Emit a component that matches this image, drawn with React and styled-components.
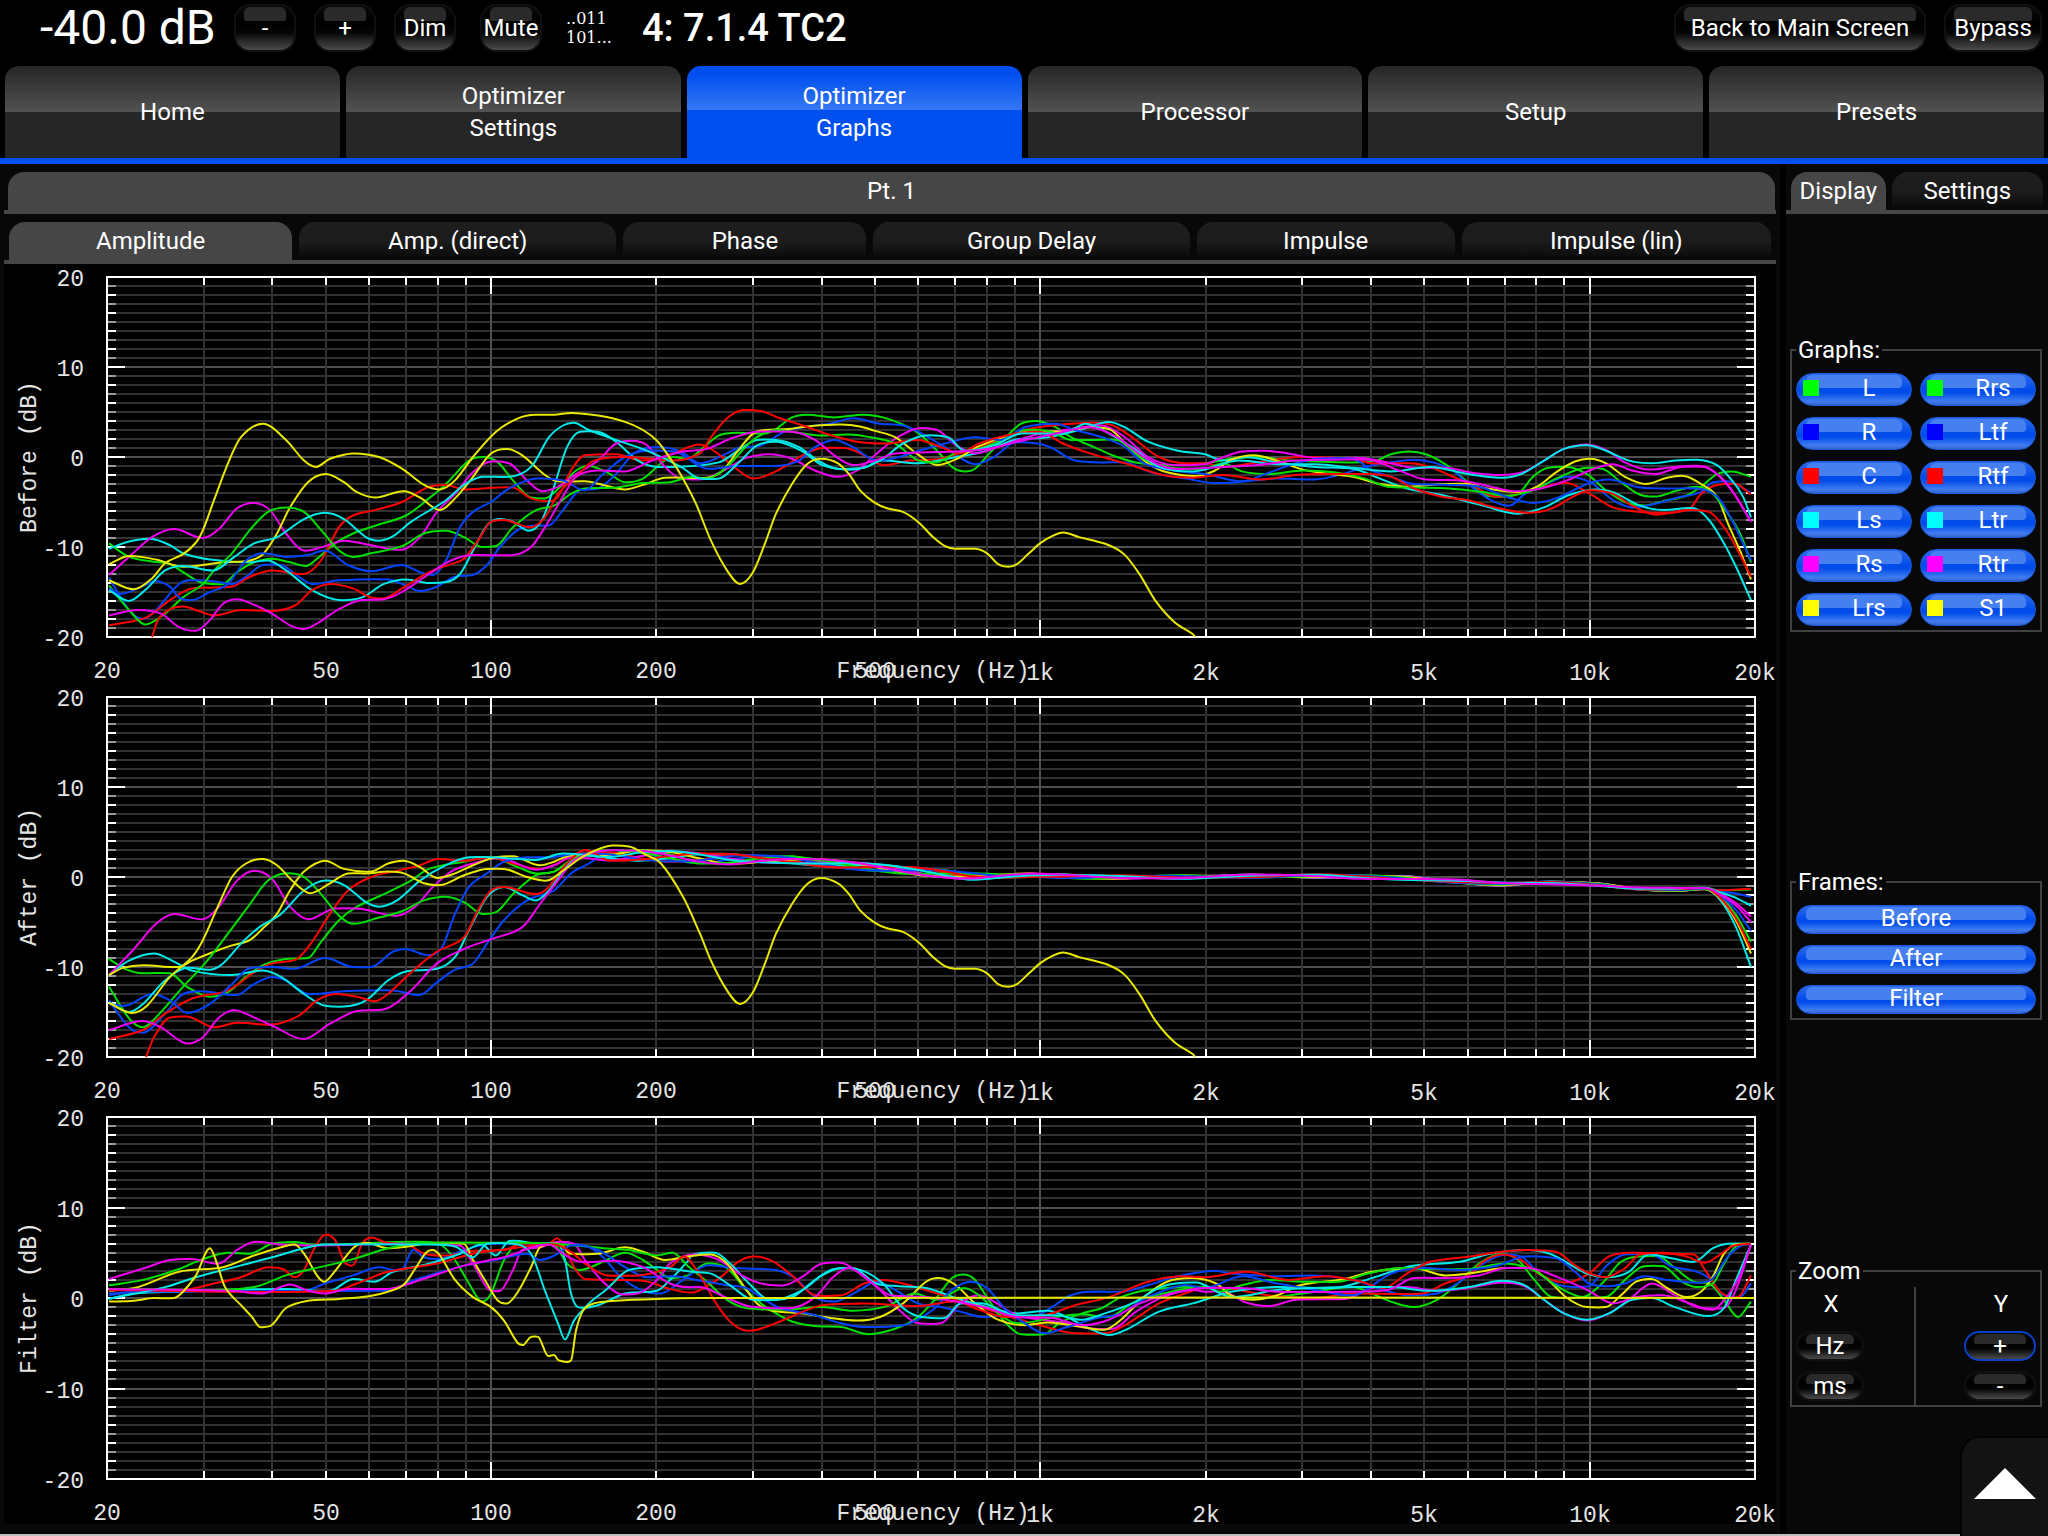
import React, { useState } from "react";
import styled, { createGlobalStyle } from "styled-components";

const GlobalStyle = createGlobalStyle`
  * { box-sizing: border-box; }
  body {
    margin: 0;
    background: #000;
    color: #fff;
    font-family: Roboto, "Liberation Sans", sans-serif;
    font-size: 24px;
    line-height: 32px;
  }
  button { font: inherit; color: inherit; cursor: pointer; }
`;

/* ---------- channel data: "x,dB" pairs, x along the log frequency axis ---------- */

const BEFORE = {
  L: "109,-9.6 129,-11.1 152,-11.6 170,-11.9 183,-12.8 203,-14 223,-14.1 237,-12.8 254,-11.7 272,-11.3 290,-11.7 306,-12.1 317,-11.3 335,-9.6 353,-8.5 379,-7.5 406,-6.5 429,-4.6 446,-3 469,-.4 484,0 498,-.6 513,-2.6 531,-4.5 545,-4.6 563,-3 576,-1.5 589,-1 607,-1.7 625,-2.8 643,-2.4 661,-.7 673,0 688,-.2 704,1.1 719,2.4 738,2.7 765,2.6 776,3.1 792,4.4 807,4.7 834,4.4 864,4.7 883,4.4 903,3.6 919,2.6 937,.7 952,-1.1 964,-1.6 975,-1.3 991,.6 1006,2.2 1021,3.7 1037,4 1056,3.3 1071,2.2 1094,1.1 1117,0 1140,-.7 1174,-.9 1205,-.7 1231,-.2 1257,0 1292,-.4 1353,-.6 1376,-.4 1391,.3 1409,.6 1426,.3 1445,-.8 1468,-2.8 1487,-4.3 1502,-4.4 1518,-4.1 1533,-2.2 1548,-1.2 1567,-1.1 1587,-1.9 1606,-3.7 1625,-5 1644,-5.4 1663,-4.9 1686,-4.3 1701,-3.3 1717,-1.9 1732,-1.6 1751,-2.2",
  R: "109,-13.4 129,-17 143,-18 156,-17 179,-14.1 192,-13.7 214,-13.8 232,-14.1 246,-13.3 263,-12 281,-12 295,-13 312,-14.1 339,-13.7 388,-13.6 402,-14.1 420,-14.9 437,-14.4 455,-13.3 473,-13.1 487,-12 500,-10 518,-8.1 536,-7.6 549,-7.6 563,-5.9 580,-3.7 598,-3.5 616,-1.9 634,.4 656,1.1 681,.6 700,-.7 727,.4 738,1 761,1.3 784,2.8 803,3.3 830,3.7 853,4.3 880,3.7 903,3.5 922,2.6 945,1.1 975,-.8 994,0 1015,1.6 1037,1.5 1052,1 1075,-.4 1102,-.6 1125,-.6 1151,-1.7 1186,-2.4 1216,-2.9 1238,-2.8 1277,-2.4 1315,-2.5 1342,-1.9 1365,-1.1 1391,-.6 1414,-.3 1433,-.6 1453,-1.5 1468,-3 1491,-4.8 1510,-5.4 1525,-4.1 1544,-3.1 1567,-2.2 1590,-2.8 1613,-4.8 1632,-5.6 1655,-5.2 1678,-4.5 1701,-3.9 1713,-2.8 1728,-2.7 1751,-4",
  C: "109,-18.7 125,-18.4 147,-17.8 170,-15.9 192,-14.6 232,-14.4 250,-13.3 272,-12.6 304,-13 321,-11.5 339,-7.8 353,-6.5 375,-5.9 402,-5 429,-3.3 446,-3.1 464,-3.6 513,-3.4 531,-4.6 549,-4.9 558,-4.4 571,-1.5 585,.2 616,.3 643,-.4 673,.4 700,1.4 715,.6 734,-1.1 753,-2.4 776,-1.6 803,.2 822,1 845,1 864,.2 883,-.9 910,-.4 941,-.2 964,.6 994,1.7 1025,3 1052,3.5 1094,3.8 1113,3.5 1132,2.2 1159,0 1186,-.7 1205,-.7 1223,-1.1 1257,-.6 1300,0 1353,-.2 1372,-.7 1410,-.7 1430,-1.1 1449,-2 1472,-3.1 1495,-4.4 1518,-4.1 1544,-3.3 1567,-2.9 1590,-4.1 1613,-5.6 1640,-6.1 1667,-6.2 1690,-5.7 1701,-4.1 1717,-3.1 1736,-3 1751,-4.2",
  Ls: "109,-10.2 129,-9.4 152,-9.1 170,-9.8 183,-10.7 210,-11.4 250,-11.7 268,-11.5 286,-12.6 312,-14.8 339,-15.9 362,-15.6 384,-14.1 406,-13.6 429,-14 446,-13.9 460,-13 473,-10.4 487,-7.6 500,-6.9 513,-7.2 529,-8.2 542,-7 554,-3.3 567,1.1 580,2.8 598,2.8 616,1.7 638,-.4 657,-1.1 673,-1.1 719,-.6 738,.7 757,1.9 776,1.9 799,1.1 818,-.4 838,-1.3 864,-1.2 880,-.4 918,-.7 956,0 987,.7 1014,1.9 1048,2.2 1079,3 1109,3.9 1125,3.3 1148,1.7 1178,.7 1205,.3 1223,-.4 1246,0 1277,-.6 1315,-1.1 1353,-1.3 1380,-2.4 1407,-3.5 1445,-4.3 1483,-5.4 1518,-6.3 1544,-5.6 1567,-4.3 1594,-3.6 1613,-3.9 1640,-5.4 1663,-5.9 1694,-5.7 1709,-7 1724,-9.6 1736,-12.2 1751,-15.9",
  Rs: "109,-13.1 129,-11.1 152,-8.9 174,-8 203,-9 219,-8 237,-5.7 254,-5.1 270,-5.9 286,-8.5 304,-10.4 325,-9.9 344,-9.3 371,-9.8 402,-10.3 420,-8.9 437,-6.1 455,-4.1 473,-1.7 491,-.5 509,-.7 527,-2.6 542,-3.8 558,-3.3 576,-1.9 598,-.4 616,1.5 632,1.8 647,1.3 665,-1.1 681,-2.4 700,-2.5 727,-1.3 746,-.1 769,.3 792,-.2 815,-1.5 838,-2.2 857,-1.5 875,.2 895,2 919,3.2 937,3 956,1.3 975,.4 998,1.1 1033,2.4 1071,3.1 1102,3.5 1125,2.2 1148,0 1174,-.9 1205,-.8 1219,-.2 1242,.6 1265,.7 1288,.4 1315,-.1 1361,-.1 1391,-.7 1414,-1.2 1445,-1.2 1475,-1.8 1502,-2 1525,-1.6 1544,-.4 1564,.9 1587,1.4 1606,.8 1625,-.6 1648,-1.4 1675,-1.1 1701,-1 1717,-1.9 1732,-3.7 1751,-7.2",
  Lrs: "109,-11.9 129,-11 156,-11.4 183,-12.2 223,-11.7 250,-11.5 263,-10.8 277,-8.5 290,-5.6 308,-2.8 326,-1.9 344,-2.8 357,-3.9 375,-4.5 404,-3.8 420,-4.5 440,-5.9 455,-4.6 473,-2.2 491,.4 507,.9 522,.2 545,-2 558,-2.7 585,-2.7 603,-3.1 625,-3.6 643,-3.1 665,-2.3 707,-2.3 723,-1.5 738,.7 753,2.6 765,3 788,3.1 807,3.4 841,3.6 860,3.4 875,2.9 895,2.2 919,.2 937,-.9 955,-.3 979,1.2 1015,2.6 1040,2.9 1063,2.8 1090,3.3 1109,3.1 1129,1.1 1148,-.7 1167,-1.7 1197,-2.1 1215,-1.5 1231,-.3 1254,.2 1277,-.4 1303,-1.4 1330,-1.9 1353,-2.2 1380,-3 1407,-3.3 1445,-3 1468,-3 1487,-3.5 1518,-3.9 1537,-3.3 1556,-1.7 1575,-.5 1590,-.2 1606,-.7 1625,-2.2 1646,-3 1667,-2.3 1684,-2.1 1701,-3 1717,-4.4 1728,-7.4 1740,-10.4 1751,-13.6",
  Rrs: "109,-14.3 129,-17 145,-18.6 165,-17.4 183,-15.6 203,-14.1 214,-12.6 232,-10.7 250,-8.1 268,-6.1 286,-5.6 304,-6.1 321,-8.1 339,-10.4 353,-11.1 371,-10.7 402,-9.9 424,-8.5 446,-8.2 464,-8.9 482,-10 496,-9.9 513,-7.8 536,-5.9 554,-5.4 571,-4.1 585,-3.5 616,-3.4 643,-2.9 670,-2.8 692,-2.2 707,-2.4 727,-1.1 742,.7 757,2.2 776,3 803,2.6 822,2.4 849,2.5 875,2.1 895,1.5 919,-.4 937,-.6 955,.4 979,.9 1002,1.9 1025,3 1048,2.9 1071,1.9 1094,1.9 1117,1.9 1140,0 1163,-1.1 1205,-1.3 1223,-.7 1242,-1.6 1269,-1.9 1303,-1.5 1334,-1.7 1365,-2.4 1388,-3.3 1414,-3.4 1449,-3.5 1483,-3.9 1506,-4.3 1533,-3.7 1556,-2.4 1587,-1.2 1602,-1.3 1621,-2.8 1640,-4.2 1655,-4.4 1678,-3.7 1697,-3.3 1713,-4.1 1728,-6.3 1740,-8.5 1751,-11.7",
  Ltf: "109,-14.6 121,-15.2 138,-14.6 156,-13.8 170,-14.4 179,-15.6 192,-15.9 210,-15 228,-14.1 246,-11.5 263,-10.7 286,-11.1 308,-10.9 325,-10.4 348,-12 371,-12.7 402,-12 420,-12.8 433,-13.1 446,-11.5 460,-7.8 473,-6.1 491,-5 509,-3.5 536,-2.4 563,-2.6 585,-3.7 603,-1.9 625,0 647,.7 674,.6 707,-1.3 738,-1 776,-1 799,-.4 815,1.1 834,1.9 853,1.1 876,-.4 899,0 919,.7 945,1.5 975,2.2 1002,1.9 1025,3.3 1056,3.7 1075,3 1102,2.2 1125,1.1 1144,-.7 1174,-1.5 1205,-1.9 1242,-2.7 1265,-1.9 1296,-.7 1322,-.2 1353,-.2 1372,-1.5 1391,-2.2 1414,-3 1449,-3.1 1479,-3.3 1506,-4.4 1533,-5.1 1556,-4.6 1587,-3 1609,-2.5 1640,-3.4 1667,-3.5 1697,-3.5 1717,-4.4 1732,-7 1743,-9.6 1751,-11.5",
  Rtf: "152,-20 158,-18.1 170,-16.9 183,-16.6 201,-17.2 214,-17.6 241,-17 272,-17.1 295,-16.5 312,-14.8 330,-14.1 353,-14.6 371,-15.6 384,-15.7 402,-14.6 429,-12.8 451,-11.9 464,-11.3 478,-9.3 491,-7.2 504,-7 531,-7.8 545,-6.7 558,-4.1 576,-2.2 594,-.4 625,0 652,-.2 673,-.4 700,.4 711,2.2 727,4.3 742,5.2 761,5.1 780,4.3 803,3.5 826,2.6 857,1.7 887,1.5 918,1.9 941,1.1 960,.4 979,1.5 1015,2.6 1040,2.8 1063,1.5 1090,.4 1125,-.7 1163,-2 1193,-2.3 1223,-2 1261,-2.5 1296,-2 1334,-1.9 1365,-1.9 1391,-2.2 1414,-3.5 1441,-4.4 1468,-4.8 1495,-5.6 1529,-6.2 1552,-5.7 1575,-4.3 1590,-3.7 1613,-4.1 1632,-5.4 1655,-6.4 1690,-5.9 1709,-6.1 1724,-7.8 1736,-10 1751,-13.3",
  Ltr: "109,-14.8 129,-16 147,-14.6 165,-12.6 183,-12.1 214,-12.6 232,-11.3 254,-9.6 277,-8.9 304,-6.9 325,-6.2 344,-6.9 366,-8.9 379,-9.3 393,-8.8 411,-7.2 446,-4.8 464,-3.1 482,-2.2 509,-2.2 531,-1.1 549,2.2 563,3.5 574,3.8 589,3 616,1.9 647,.7 681,-1.1 700,-2.4 719,-2.4 738,-.7 757,1.3 776,1.7 803,.6 822,-.9 853,-1.4 880,-.4 903,1.5 926,2.4 948,2.2 964,.7 994,1.3 1021,2.6 1063,2.6 1086,3.7 1109,2.6 1132,1.1 1159,-1.1 1193,-1.6 1205,-1.4 1238,-.4 1277,-.8 1315,-.8 1353,-1.2 1391,-1.6 1430,-1.1 1468,-1.9 1502,-2.3 1521,-1.9 1544,-.4 1564,.9 1587,1.3 1606,.7 1629,-.4 1652,-.7 1675,-.4 1697,-.3 1717,-.9 1732,-2.6 1743,-4.4 1751,-6.7",
  Rtr: "109,-17.6 138,-17 161,-17.4 179,-18.9 196,-19.3 210,-18.1 223,-16.3 237,-15.8 254,-16.4 272,-17.4 290,-18.7 304,-19.1 317,-18.5 339,-16.9 362,-15.9 384,-15.8 402,-15 429,-13 451,-11.5 473,-10.9 513,-10.9 531,-10 545,-7.8 563,-4.4 576,-2.2 598,-1.5 625,-1.6 652,-.4 683,.6 707,.9 730,2 757,2.8 792,2.8 815,1.9 834,.2 853,-.9 875,-.4 895,.4 956,.6 987,.9 1025,1.9 1056,2.6 1090,3.3 1117,2.2 1144,0 1174,-1.3 1224,-1.1 1257,-.9 1296,-.4 1334,-.3 1368,-.3 1399,-1.5 1426,-2.5 1460,-2.6 1491,-3.3 1514,-3.8 1541,-3.5 1567,-2.6 1594,-1.3 1613,-.8 1632,-1.5 1655,-1.9 1682,-1.1 1705,-1.1 1720,-2.2 1736,-4.4 1751,-7.2",
  S1: "109,-13.7 134,-14.7 152,-13.5 165,-11.8 183,-10.8 196,-9.5 203,-8.1 214,-4.8 228,-.7 241,2.2 263,3.7 286,1.9 304,-.4 316,-1.1 330,-.2 353,.4 379,0 402,-1.3 424,-3.1 440,-3.6 455,-2.6 473,0 496,2.8 518,4.3 536,4.7 554,4.7 571,4.9 598,4.6 625,3.9 643,3 657,1.8 673,-.6 684,-2.6 696,-5.2 711,-9.3 727,-12.6 740,-14.1 753,-12.8 765,-9.6 776,-6.3 792,-3 807,-.8 821,-.2 838,-.7 849,-1.9 860,-3.7 875,-5.1 887,-5.7 903,-6.1 919,-7.3 933,-8.9 945,-9.9 955,-10.2 975,-10.2 987,-10.7 998,-11.9 1008,-12.2 1017,-11.9 1029,-10.7 1040,-9.6 1052,-8.8 1063,-8.4 1079,-8.9 1109,-9.8 1125,-10.9 1140,-13.1 1155,-15.9 1174,-18.3 1193,-19.7 1195,-20",
};

const AFTER_LOW = {
  L: "109,-9.1 125,-10.2 143,-10.7 170,-10.7 187,-12.2 210,-13.3 228,-12.8 246,-11.1 263,-9.8 286,-9.1 308,-9 321,-7.2 339,-4.8 357,-3.3 384,-1.9 411,-.4 429,.9 464,1.7 491,2.2 518,1.1 536,.4 554,.6 576,2.2",
  R: "109,-13.7 129,-16.7 143,-17.3 165,-15.2 183,-13 201,-12.7 237,-13.1 254,-11.9 272,-11.1 286,-11.5 308,-13 344,-12.7 393,-12.6 420,-13.1 437,-11.7 455,-10.3 473,-9.6 487,-7.4 504,-4.8 527,-2.6 554,-1.5 571,.4 589,1.5",
  C: "109,-18 143,-17 165,-15.2 192,-13.5 228,-12.6 254,-10.6 272,-9.6 297,-9.1 312,-7.2 330,-4.1 348,-1.5 371,0 393,.6 420,1.3 437,2 464,1.8 491,2.2 513,1.5 540,.9 558,1.5 576,2.6",
  Ls: "109,-10.9 129,-9.3 154,-8.5 174,-9.4 192,-10.4 232,-10.9 263,-10.4 281,-11.1 304,-13 325,-14.3 344,-14.4 366,-13.7 388,-11.5 406,-10.5 437,-10.2 455,-8.9 469,-5.9 487,-2.2 504,-1.1 522,-2 536,-2.6 549,-1.5 563,.7 580,2.4",
  Rs: "109,-10.9 134,-8 156,-5.2 174,-4.1 203,-4.7 219,-3.3 237,-.4 254,.7 272,-.2 290,-3.3 308,-4.7 335,-3.5 357,-3.5 397,-4.3 415,-3.3 433,-1.1 451,.6 473,1.5 500,2.1 536,.8 554,1.3 571,2.2",
  Lrs: "109,-10.9 123,-10.1 143,-9.8 179,-10 192,-9.3 214,-8.3 232,-7.6 250,-7 263,-5.7 277,-4.1 290,-1.5 304,.6 325,1.8 344,.9 371,.6 388,1.5 404,1.8 420,1.1 437,-.1 455,.4 473,1.3 496,2.2 513,2.3 540,1.3 554,1.7 571,2.4",
  Rrs: "109,-12.2 129,-15.7 143,-16.7 156,-15.6 183,-12.2 205,-9.6 228,-6.3 250,-3 268,-.4 286,.4 304,0 321,-1.9 339,-4.3 353,-5.2 379,-4.5 402,-3.8 424,-2.6 446,-2.2 464,-2.8 482,-4.1 496,-3.9 513,-1.9 536,.2 554,.6 576,2.2",
  Ltf: "109,-14.1 125,-14.3 152,-13 170,-13.7 187,-15.1 210,-14.1 232,-11.9 250,-10.1 272,-10 295,-10.2 325,-9 353,-10 371,-10 393,-8.3 405,-8 429,-8.7 442,-7.8 455,-4.1 469,-1.1 487,.4 504,1.7 527,2.2 549,2.2 580,2.6",
  Rtf: "146,-20 154,-17.8 170,-15.6 187,-15.5 214,-16.7 237,-16.2 272,-16.4 299,-15.4 317,-13.7 335,-13 357,-13.3 375,-13.8 388,-13 411,-10.6 437,-8.3 464,-6.7 478,-3.7 491,-1.5 504,-1.1 536,-1.9 547,-1.3 567,1.5 585,3",
  Ltr: "109,-13.9 129,-15 143,-14.1 165,-11.5 187,-10.1 210,-10.3 223,-9.6 241,-7.4 259,-5.6 281,-4.1 304,-1.5 325,-.4 344,-.9 366,-2.8 379,-3.3 397,-2.6 420,-.4 442,1.1 469,2.2 491,2.2 536,1.9 563,2.6",
  Rtr: "109,-17 143,-16 161,-16.7 187,-18.5 203,-17.8 219,-15.6 234,-14.8 254,-15.6 272,-16.5 304,-18 330,-16.3 357,-14.9 384,-14.7 411,-12.6 437,-9.6 464,-8 491,-6.9 522,-5.6 540,-3 558,-.4 576,2",
  S1: "109,-14 132,-15.1 147,-14.3 170,-11.1 192,-8.9 203,-7 219,-3 232,0 246,1.5 263,2 277,1.3 295,-.7 310,-1.8 330,-.7 348,.4 366,.4 388,.6 404,.4 424,-.7 440,-.9 464,.2 487,.9 504,.9 527,0 547,-.4 563,.7 585,2.4 612,3.5 629,3.4 647,2.4 661,1.5 683,-2.2 700,-6.3 711,-9.3 727,-12.6 740,-14.1 753,-12.8 765,-9.6 776,-6.3 792,-3 807,-.8 821,-.1 838,-.7 849,-1.9 860,-3.7 875,-5.1 887,-5.7 903,-6.1 919,-7.3 933,-8.9 945,-9.9 955,-10.2 975,-10.2 987,-10.7 998,-11.9 1008,-12.2 1017,-11.9 1029,-10.7 1040,-9.6 1052,-8.8 1063,-8.4 1079,-8.9 1109,-9.8 1125,-10.9 1140,-13.1 1155,-15.9 1174,-18.3 1193,-19.7 1195,-20",
};

const FILTER = {
  L: "109,1.4 143,2 179,3.2 203,4.3 228,5 250,4.9 272,6 295,6.2 312,5.9 429,6.2 442,5.8 455,4.2 469,1.6 482,-.4 491,.5 504,4.2 518,6 554,5.9 567,3.8 580,3.1 603,4 625,5 643,4.2 657,3.1 670,2.2 688,2.5 707,3.8 727,3.3 746,.9 761,-.6 776,-1.7 792,-2.6 815,-3.1 841,-3.2 868,-4 895,-3.4 918,-2.1 937,.1 952,2.2 964,2.6 975,2 991,-.6 1006,-2.8 1021,-4 1044,-4 1059,-2.8 1082,-1.7 1102,-1.1 1121,.1 1148,.9 1205,1.2 1223,.5 1246,-.1 1277,.1 1315,.7 1353,1.2 1372,.5 1391,-.4 1414,-1 1437,-.2 1456,1.4 1479,3.8 1502,4.9 1518,4.2 1533,2.2 1552,.1 1583,.1 1602,1.6 1621,4 1640,4.6 1659,4.6 1675,3.3 1694,1.8 1709,1.6 1724,-.2 1738,-2.1 1751,-.4",
  R: "109,.5 156,.8 304,.8 325,1.6 353,2.5 379,3.4 393,3.1 402,3.2 413,5.3 424,4.5 437,4.3 464,5.3 491,6 549,6 585,5.8 603,4.5 621,2.3 643,.8 661,.5 683,2 707,3.6 734,3.3 776,3.1 795,2.2 815,.1 834,-.4 857,.7 876,1.8 895,.9 918,-.6 941,-1 960,-1.5 983,-2.1 1010,-1.9 1033,-2.1 1052,-1 1071,.3 1090,.7 1121,.7 1148,1.4 1178,2.4 1216,3 1231,2.7 1277,2.4 1315,2.5 1353,2 1383,.9 1407,.3 1437,.5 1460,1.8 1483,3.8 1506,4.8 1521,4.6 1541,2.5 1564,1.3 1589,1.3 1606,3.5 1625,4.8 1652,4.8 1671,3.5 1694,3 1709,2.2 1724,.3 1740,.1 1751,1.6",
  C: "109,1 183,.9 214,1.6 241,2.3 268,3.4 283,3.2 295,2.3 304,3.1 315,5.6 325,7 335,6.4 346,3.8 353,3.6 362,6 371,6.7 384,6.2 411,5.7 424,4.9 446,4.7 473,5.2 504,5.3 522,6 549,6 557,6.6 565,5.6 574,3.4 585,2.1 616,2 643,1.9 670,1 692,.6 707,1.3 723,2.5 738,4 753,4.6 772,4.1 792,2.5 815,.3 841,.3 864,1.6 883,2 903,1.6 937,.5 968,-.6 1006,-1.9 1040,-3 1075,-3.9 1105,-3.9 1128,-2.8 1159,-.6 1190,.7 1205,1.2 1238,.9 1269,.3 1315,0 1353,.5 1422,.5 1445,1.6 1468,2.5 1483,4 1502,4.8 1521,4.2 1541,2.5 1567,1.7 1589,2.7 1609,4.6 1632,5 1667,4.9 1694,4.8 1705,3.1 1720,.7 1738,.1 1751,2.5",
  Ls: "109,-.1 134,.5 179,.7 286,1 330,.8 353,2.1 375,1.8 393,2.9 429,3.8 460,4.9 482,5.9 496,4.7 509,6.3 540,6 558,6 565,4.2 571,.5 578,-1 598,-.8 625,.5 657,.8 670,2 688,4.1 692,4.8 715,5 730,3.8 749,1.6 769,-.2 792,.1 815,2 834,3.2 853,3.3 876,1.6 899,1.3 926,1.1 956,0 987,-1 1017,-1.7 1048,-1.4 1067,-2.1 1090,-3.4 1109,-4.1 1128,-3.4 1159,-1.5 1193,-.6 1205,-.2 1231,.7 1277,1.2 1334,1.1 1372,2.2 1410,3.5 1460,4 1495,5 1529,5.3 1552,4.8 1587,2.7 1609,2.3 1629,2.9 1648,4.8 1671,4.4 1694,4 1713,5.5 1728,6 1751,6",
  Rs: "109,2.1 147,3.4 170,4.2 192,4.3 219,3.8 237,5.3 254,6.2 281,5.9 312,5.8 402,6 460,5.8 473,3.8 491,.8 500,.8 513,3.1 522,5.3 540,5.6 558,6.2 574,6 585,4.2 603,1.8 621,.4 638,.5 657,2 670,3.8 683,4.6 696,4.8 719,4.2 742,2.5 761,1.6 784,1.4 803,2.4 822,3.8 841,3.9 860,2.7 880,.9 899,-1.3 918,-2.8 941,-2.8 960,-.6 979,.3 994,-.4 1017,-1.9 1056,-2.6 1094,-3.4 1113,-3.4 1136,-1.5 1163,.1 1193,.9 1205,.7 1223,.7 1246,-.5 1269,-.9 1296,-.2 1345,-.1 1376,1.2 1407,1.2 1437,.8 1468,1.1 1502,1.7 1525,1.3 1544,-.2 1564,-1.7 1587,-2.5 1609,-1.7 1629,-.2 1652,1.6 1675,.3 1701,-1.1 1724,-1.1 1736,.9 1751,5.9",
  Lrs: "109,.8 138,1.2 179,2.9 223,3.4 254,4.7 281,5.6 295,5.9 304,4.9 324,1.8 333,2.7 353,5.5 366,6.1 388,5.5 437,6.1 464,6 473,4.2 487,1.6 498,-.3 507,-.6 518,.7 531,3.4 540,5.6 558,6 571,4.9 598,4.9 625,5.6 643,5.1 665,4.2 688,4.6 711,4.8 727,3.8 742,1.6 757,-.6 772,-1.4 803,-1.7 830,-2.2 857,-2.5 880,-2.1 903,-.6 926,1.8 939,2.2 956,1.4 975,-.6 998,-2.4 1025,-3 1048,-2.7 1082,-3.2 1105,-3.5 1121,-2.4 1144,.1 1167,1.8 1193,2.2 1216,1.6 1231,.3 1254,-.2 1277,.3 1300,1.4 1345,2.1 1372,2.9 1414,3.3 1445,2.5 1468,2.7 1506,3.3 1529,3.3 1548,2 1567,0 1587,-1 1606,-1 1621,.3 1636,1.8 1652,2.1 1667,1.1 1686,.1 1701,.7 1713,2.4 1724,4.9 1736,5.9 1751,6",
  Rrs: "109,1 214,.9 254,1.2 286,2.5 312,3.2 353,4.3 388,5.5 424,6.1 513,6.1 554,6 603,5.5 629,5.3 657,4.7 673,5 688,3.5 707,1.8 727,-.2 746,-1.1 784,-1.3 822,-1 853,-1.4 887,-.9 914,.5 937,-.2 964,1.1 979,.3 998,-1.7 1017,-2.8 1056,-2.1 1082,-1.8 1109,-2.1 1132,-.6 1163,.5 1205,1.2 1219,.7 1242,1.4 1269,2 1303,1.8 1338,1.8 1368,2.7 1399,3.3 1430,3.2 1468,3.2 1506,3.8 1533,3.1 1560,1.1 1583,.1 1606,.1 1625,2 1644,3.5 1663,3.5 1682,1.8 1697,1.2 1713,1.6 1724,3.8 1736,5.7 1751,6",
  Ltf: "109,.3 134,.7 384,.8 415,2 465,3.6 500,4.3 527,4.9 540,4.2 558,4.9 571,5.8 598,5.3 625,3.4 647,2.3 673,2.4 696,2 727,1.4 746,1.1 765,-.2 780,-1.1 815,-1.9 841,-2.8 864,-3.2 903,-3 933,-1.3 952,.9 971,1.8 987,1.1 1006,-1.3 1025,-2.8 1044,-3.9 1067,-3.2 1098,-2.2 1121,-1.7 1148,.1 1186,1.4 1205,1.1 1242,2.4 1277,1.6 1315,.9 1353,.3 1391,2.7 1422,3.3 1460,3.1 1498,3.6 1525,4.6 1556,4.4 1575,2.9 1589,1.6 1606,1.3 1625,1.6 1644,2.4 1667,2 1701,1.7 1713,2.2 1728,4.6 1740,5.7 1751,6",
  Rtf: "109,.9 335,.8 357,1.6 388,2.9 437,3.8 473,4.9 500,5.3 554,5.9 571,5.1 585,3.8 607,2.5 638,2.5 670,3.4 684,4.6 700,2.5 715,-.4 730,-2.6 746,-3.6 757,-3.5 780,-2.6 803,-1.5 822,-.8 864,-.6 918,-.9 956,-.4 979,-1.3 1006,-2.1 1044,-1.9 1075,-.8 1109,.1 1148,1.8 1182,2.4 1205,2.3 1246,2.9 1288,2 1326,2.4 1361,1.8 1384,1.1 1407,2.7 1430,4 1464,4.5 1502,5.1 1529,5.3 1556,5.1 1575,3.6 1590,2.7 1606,2.3 1625,3.3 1640,4.8 1663,5 1686,4.6 1705,3.9 1720,4.8 1732,5.7 1751,6",
  Ltr: "109,-.1 165,1.2 196,2.3 241,3.6 272,4.5 304,5.5 325,5.9 429,5.9 455,5.7 473,4.5 487,6 513,6 531,4.9 545,.8 558,-2.8 565,-4.6 574,-2.5 589,-.6 607,1 629,3.1 657,3.4 692,2.9 711,2.7 730,1.4 753,-.2 776,-.2 803,.9 822,2.5 841,3.3 860,3.1 883,1.6 903,-1.1 922,-2.1 945,-2.2 960,-.6 983,-.6 1014,-1.9 1056,-1.9 1082,-2.4 1105,-1.7 1132,-.6 1163,1.3 1197,1.7 1205,1.4 1231,.1 1277,.9 1315,1.1 1353,1.2 1391,1.2 1430,.8 1468,1.2 1502,1.9 1525,1.4 1544,-.2 1564,-1.7 1587,-2.4 1609,-1.7 1632,-.2 1652,0 1675,-1 1709,-2 1724,-1.1 1736,2 1751,5.9",
  Rtr: "109,1 232,.8 263,.5 290,1.5 308,.8 325,.5 348,1 388,1 415,1.8 465,3.6 504,4.5 549,5.9 563,4.9 580,4 616,4.1 643,3.4 670,1.6 688,1.2 700,1.2 727,0 753,-1 792,-1.1 815,.1 834,2.4 849,3.3 868,2 891,.3 926,.1 956,-.4 987,-1.1 1017,-2.1 1052,-2.2 1082,-3 1109,-2.4 1140,-.6 1171,.5 1205,1.1 1242,1.1 1277,.7 1353,.7 1388,.9 1414,2.2 1445,2.2 1479,2.5 1506,3.3 1529,3.3 1560,2.2 1587,.9 1613,-.6 1636,.1 1663,.3 1690,-.6 1713,-1.3 1728,.3 1740,2.5 1751,5.9",
  S1: "109,-.4 134,-.3 154,0 174,0 183,.7 196,2.5 210,5.5 217,3.8 225,1.2 241,-.8 252,-2.1 260,-3.2 270,-3.1 286,-1.1 308,-.3 339,-.1 369,.2 388,.7 404,1.5 415,3.2 426,5 433,5.3 440,4.7 455,2 473,.1 491,-1 504,-2.5 518,-5 523,-5.2 531,-4.3 538,-4.3 548,-6.4 554,-6.3 559,-6.9 571,-6.9 576,-3.6 583,-1.4 594,-.6 616,-.3 657,-.1 700,0 1754,0",
};

const CHANNELS = [
  { id: "L", line: "#00e000", swatch: "#00ff00" },
  { id: "R", line: "#0044ff", swatch: "#0000ff" },
  { id: "C", line: "#ff0000", swatch: "#ff0000" },
  { id: "Ls", line: "#00e8e8", swatch: "#00ffff" },
  { id: "Rs", line: "#f000f0", swatch: "#ff00ff" },
  { id: "Lrs", line: "#e8e800", swatch: "#ffff00" },
  { id: "Rrs", line: "#00e000", swatch: "#00ff00" },
  { id: "Ltf", line: "#0044ff", swatch: "#0000ff" },
  { id: "Rtf", line: "#ff0000", swatch: "#ff0000" },
  { id: "Ltr", line: "#00e8e8", swatch: "#00ffff" },
  { id: "Rtr", line: "#f000f0", swatch: "#ff00ff" },
  { id: "S1", line: "#e8e800", swatch: "#ffff00" },
];

const parse = (text) => text.split(" ").map((pair) => pair.split(",").map(Number));

/* The corrected channels all follow one target above the bass range. */
const TARGET = parse(
  "610,2.4 640,2.4 670,2.3 700,2.1 730,2 760,2 790,1.9 820,1.6 850,1.3 880,1 910,.7 940,.4 970,.1 1000,.1 1030,.2 1060,.1 1090,0 1120,0 1180,0 1250,.1 1320,.1 1360,0 1400,-.1 1450,-.4 1500,-.8 1550,-.7 1600,-.8 1640,-1.2 1680,-1.4 1705,-1.4"
);
const ROLL_OFF = { L: -1.4, R: -2.2, C: -1.3, Ls: -10, Rs: -4.4, Lrs: -8.5, Rrs: -7.2, Ltf: -6, Rtf: -8, Ltr: -3.2, Rtr: -5 };

const afterCurve = (id, index) => {
  const low = parse(AFTER_LOW[id]);
  if (id === "S1") return low;
  const tail = TARGET.map(([x, db]) => {
    const swing = x < 760 ? 0.6 : x < 1000 ? 0.4 : 0.2;
    return [x, db + swing * Math.sin(x / (24 + index) + index * 2.1)];
  });
  const end = ROLL_OFF[id];
  return [...low, ...tail, [1720, -1.5 + (end + 1.5) * 0.12], [1736, -1.5 + (end + 1.5) * 0.48], [1751, end]];
};

/* Cubic through the samples with limited tangents, so peaks stay where the samples put them. */
const smoothPath = (points) => {
  const n = points.length;
  const slope = [];
  for (let i = 0; i < n - 1; i++) {
    slope.push((points[i + 1][1] - points[i][1]) / (points[i + 1][0] - points[i][0]));
  }
  const tangent = points.map((_, i) => {
    if (i === 0) return slope[0];
    if (i === n - 1) return slope[n - 2];
    const a = slope[i - 1];
    const b = slope[i];
    if (a * b <= 0) return (a + b) * 0.15;
    const mean = (points[i + 1][1] - points[i - 1][1]) / (points[i + 1][0] - points[i - 1][0]);
    return Math.sign(mean) * Math.min(Math.abs(mean), 3 * Math.abs(a), 3 * Math.abs(b));
  });
  let d = `M${points[0][0]} ${points[0][1].toFixed(1)}`;
  for (let i = 0; i < n - 1; i++) {
    const [x0, y0] = points[i];
    const [x1, y1] = points[i + 1];
    const h = (x1 - x0) / 3;
    d += `C${(x0 + h).toFixed(1)} ${(y0 + tangent[i] * h).toFixed(1)} ${(x1 - h).toFixed(1)} ${(y1 - tangent[i + 1] * h).toFixed(1)} ${x1} ${y1.toFixed(1)}`;
  }
  return d;
};

const FRAMES = [
  { name: "Before", height: 360, curve: (id) => parse(BEFORE[id]) },
  { name: "After", height: 360, curve: afterCurve },
  { name: "Filter", height: 362, curve: (id) => parse(FILTER[id]) },
];

/* ---------- chart ---------- */

const LEFT = 107;
const RIGHT = 1755;
const TOP = 13;

const xOf = (hz) => Math.round(LEFT + ((RIGHT - LEFT) * Math.log10(hz / 20)) / 3);
const GRID_HZ = [30, 40, 50, 60, 70, 80, 90, 100, 200, 300, 400, 500, 600, 700, 800, 900, 1000, 2000, 3000, 4000, 5000, 6000, 7000, 8000, 9000, 10000];
const LABEL_HZ = [
  [20, "20"], [50, "50"], [100, "100"], [200, "200"], [500, "500"],
  [1000, "1k"], [2000, "2k"], [5000, "5k"], [10000, "10k"], [20000, "20k"],
];
const GRID_DB = Array.from({ length: 39 }, (_, i) => 19 - i);

const ChartSvg = styled.svg`
  display: block;
  width: 100%;
  height: auto;
  overflow: visible;
  font-family: "Liberation Mono", monospace;
  font-size: 23px;
`;
const GridLine = styled.line`
  stroke: ${(p) => (p.$major ? "#505050" : "#323232")};
  stroke-width: 2;
`;
const Tick = styled.line`
  stroke: ${(p) => (p.$soft ? "#9a9a9a" : "#fff")};
  stroke-width: 2;
`;
const PlotBorder = styled.rect`
  fill: none;
  stroke: #fff;
  stroke-width: 2;
`;
const Curve = styled.path`
  fill: none;
  stroke-width: 2;
`;
const AxisText = styled.text`
  fill: #e4e4e4;
`;

function Chart({ frame, visible }) {
  const { name, height } = frame;
  const bottom = TOP + height;
  const yOf = (db) => TOP + ((20 - db) * height) / 40;
  return (
    <ChartSvg viewBox="4 0 1772 420" role="img" aria-label={`${name}: level in dB over frequency`}>
      {GRID_DB.map((db) => {
        const y = Math.round(yOf(db));
        const major = db % 10 === 0;
        const length = major ? 18 : 9;
        const soft = db % 2 !== 0;
        return (
          <g key={db}>
            <GridLine $major={major} x1={LEFT} x2={RIGHT} y1={y} y2={y} />
            <Tick $soft={soft} x1={LEFT} x2={LEFT + length} y1={y} y2={y} />
            <Tick $soft={soft} x1={RIGHT - length} x2={RIGHT} y1={y} y2={y} />
          </g>
        );
      })}
      {GRID_HZ.map((hz) => {
        const x = xOf(hz);
        const major = [100, 1000, 10000].includes(hz);
        const length = major ? 17 : 8;
        return (
          <g key={hz}>
            <GridLine $major={major} x1={x} x2={x} y1={TOP} y2={bottom} />
            <Tick x1={x} x2={x} y1={TOP} y2={TOP + length} />
            <Tick x1={x} x2={x} y1={bottom - length} y2={bottom} />
          </g>
        );
      })}
      <PlotBorder x={LEFT} y={TOP} width={RIGHT - LEFT} height={height} />
      {CHANNELS.map((channel, index) =>
        visible[channel.id] ? (
          <Curve
            key={channel.id}
            stroke={channel.line}
            d={smoothPath(frame.curve(channel.id, index).map(([x, db]) => [x, yOf(db)]))}
          />
        ) : null
      )}
      {[20, 10, 0, -10, -20].map((db) => (
        <AxisText key={db} x="84" y={yOf(db) + 9} textAnchor="end">{db}</AxisText>
      ))}
      {LABEL_HZ.map(([hz, label]) => (
        <AxisText key={hz} x={xOf(hz)} y={bottom + (hz < 1000 ? 41 : 43)} textAnchor="middle">{label}</AxisText>
      ))}
      <AxisText x="933" y={bottom + 41} textAnchor="middle">Frequency (Hz)</AxisText>
      <AxisText transform={`translate(36 ${TOP + height / 2}) rotate(-90)`} textAnchor="middle">
        {`${name} (dB)`}
      </AxisText>
    </ChartSvg>
  );
}

/* ---------- page parts ---------- */

const Page = styled.div`
  position: relative;
  display: flex;
  flex-direction: column;
  min-height: 100vh;
  background: #000;
  border-bottom: 2px solid #bdbdbd;
`;

const TopBar = styled.header`
  display: flex;
  align-items: center;
  height: 66px;
  padding: 0 6px 10px 40px;
`;
const Level = styled.output`
  width: 194px;
  font-size: 48px;
  line-height: 56px;
  white-space: nowrap;
`;
const ButtonRow = styled.div`
  display: flex;
  gap: 18px;
  margin-right: ${(p) => (p.$apart ? "24px" : "0")};
`;
const DarkButton = styled.button`
  position: relative;
  isolation: isolate;
  display: flex;
  align-items: center;
  justify-content: center;
  width: ${(p) => p.$width || "62px"};
  height: ${(p) => (p.$small ? "30px" : "48px")};
  padding: 0;
  border: ${(p) => (p.$active ? "2px solid #0a3fc8" : "2px solid #101010")};
  border-radius: 16px;
  background: linear-gradient(#0c0c0c, #000 35%, #050505 60%, #2c2c2c 82%, #4a4a4a);
  line-height: ${(p) => (p.$small ? "20px" : "32px")};
  white-space: nowrap;
  &::before {
    content: "";
    position: absolute;
    z-index: -1;
    top: 1px;
    left: 8px;
    right: 8px;
    height: ${(p) => (p.$small ? "10px" : "14px")};
    border-radius: 6px 6px 2px 2px;
    background: #2a2a2a;
  }
`;
const Bits = styled.div`
  width: 76px;
  font-family: "DejaVu Serif", serif;
  font-size: 16px;
  line-height: 19px;
`;
const PresetName = styled.h1`
  flex: 1;
  margin: 0;
  font-size: 38px;
  line-height: 44px;
  font-weight: 500;
`;

const MainTabs = styled.nav`
  display: grid;
  grid-template-columns: repeat(6, 1fr);
  gap: 6px;
  padding: 0 4px 0 5px;
  border-bottom: 6px solid #0050f0;
`;
const MainTab = styled.button`
  height: 92px;
  padding: 0 80px;
  border: 0;
  border-radius: 14px 14px 0 0;
  background: ${(p) =>
    p.$on
      ? "linear-gradient(#0050f0 0 8px, #3676f2 44px, #0050f0 44px)"
      : "linear-gradient(#262626, #525252 46px, #262626 46px)"};
`;

const Body = styled.div`
  display: grid;
  grid-template-columns: minmax(0, 1fr) 262px;
  flex: 1;
`;
const Main = styled.main`
  padding: 8px 4px 0;
  background: #080808;
  border-right: 7px solid #000;
  margin-right: -1px;
`;
const PointBar = styled.div`
  margin-bottom: 8px;
  padding: 0 1px 0 4px;
  border-bottom: 4px solid #464646;
`;
const PointTitle = styled.h2`
  margin: 0;
  height: 38px;
  border-radius: 16px 16px 0 0;
  background: #464646;
  text-align: center;
  font-size: 24px;
  line-height: 38px;
  font-weight: 400;
`;
const SubTabs = styled.div`
  display: grid;
  grid-template-columns: ${(p) => p.$columns};
  gap: ${(p) => p.$gap};
  padding: 0 5px;
  border-bottom: 4px solid #464646;
`;
const SubTab = styled.button`
  height: 38px;
  padding: 0;
  border: 0;
  border-radius: 16px 16px 0 0;
  background: ${(p) => (p.$on ? "#464646" : "linear-gradient(#1e1e1e, #1c1c1c 50%, #080808)")};
  white-space: nowrap;
`;
const Charts = styled.div`
  background: #000;
`;

const Side = styled.aside`
  display: flex;
  flex-direction: column;
  padding-top: 8px;
  background: #080808;
`;
const Group = styled.fieldset`
  min-width: 0;
  margin: ${(p) => p.$top} 6px 0 4px;
  padding: ${(p) => p.$pad};
  border: 2px solid #404040;
`;
const Legend = styled.legend`
  padding: 0 2px;
`;
const PillGrid = styled.div`
  display: grid;
  grid-template-columns: ${(p) => (p.$columns === 2 ? "1fr 1fr" : "1fr")};
  gap: 11px 8px;
`;
const Pill = styled.button`
  position: relative;
  isolation: isolate;
  display: flex;
  align-items: center;
  gap: 8px;
  height: ${(p) => (p.$keyed ? "33px" : "29px")};
  padding: ${(p) => (p.$keyed ? "0 0 4px 6px" : "0 6px 4px")};
  border: 1px solid #1c5be0;
  border-radius: 17px;
  background: linear-gradient(#2b69ea, #004cea 50%, #004cea 60%, #3f7bf0 88%, #3565cc);
  line-height: 26px;
  opacity: ${(p) => (p.$on ? 1 : 0.45)};
  &::before {
    content: "";
    position: absolute;
    z-index: -1;
    top: 1px;
    left: 9px;
    right: 9px;
    height: 13px;
    border-radius: 6px 6px 4px 4px;
    background: #4680f0;
  }
`;
const Swatch = styled.span`
  width: 16px;
  height: 16px;
  background: ${(p) => p.$color};
`;
const PillText = styled.span`
  flex: 1;
  text-align: center;
`;
const ZoomGrid = styled.div`
  display: grid;
  grid-template-columns: 1fr 1fr;
`;
const ZoomColumn = styled.div`
  display: flex;
  flex-direction: column;
  align-items: ${(p) => (p.$end ? "flex-end" : "flex-start")};
  gap: 10px;
  padding-bottom: 4px;
  border-right: ${(p) => (p.$end ? "0" : "2px solid #404040")};
`;
const ZoomTitle = styled.span`
  width: 70px;
  height: 34px;
  text-align: center;
  line-height: 34px;
`;
const Drawer = styled.button`
  position: absolute;
  right: 0;
  bottom: -2px;
  width: 88px;
  height: 100px;
  padding: 0;
  border: 2px solid #030303;
  border-width: 2px 0 0 2px;
  border-radius: 20px 0 0 0;
  background: #131313;
`;

const MAIN_TABS = ["Home", "Optimizer Settings", "Optimizer Graphs", "Processor", "Setup", "Presets"];
const SUB_TABS = ["Amplitude", "Amp. (direct)", "Phase", "Group Delay", "Impulse", "Impulse (lin)"];
const SIDE_TABS = ["Display", "Settings"];
const LEFT_COLUMN = CHANNELS.slice(0, 6);
const RIGHT_COLUMN = CHANNELS.slice(6);
const PILL_ORDER = LEFT_COLUMN.flatMap((channel, i) => [channel, RIGHT_COLUMN[i]]);

export default function App() {
  const [visible, setVisible] = useState(Object.fromEntries(CHANNELS.map((c) => [c.id, true])));
  const [shown, setShown] = useState({ Before: true, After: true, Filter: true });
  const flip = (set) => (key) => set((state) => ({ ...state, [key]: !state[key] }));
  const flipChannel = flip(setVisible);
  const flipFrame = flip(setShown);

  return (
    <Page>
      <GlobalStyle />
      <TopBar>
        <Level>-40.0 dB</Level>
        <ButtonRow $apart>
          <DarkButton aria-label="Volume down">-</DarkButton>
          <DarkButton aria-label="Volume up">+</DarkButton>
          <DarkButton>Dim</DarkButton>
        </ButtonRow>
        <ButtonRow $apart>
          <DarkButton>Mute</DarkButton>
        </ButtonRow>
        <Bits>..011<br />101...</Bits>
        <PresetName>4: 7.1.4 TC2</PresetName>
        <ButtonRow>
          <DarkButton $width="252px">Back to Main Screen</DarkButton>
          <DarkButton $width="98px">Bypass</DarkButton>
        </ButtonRow>
      </TopBar>

      <MainTabs>
        {MAIN_TABS.map((label) => (
          <MainTab key={label} $on={label === "Optimizer Graphs"}>{label}</MainTab>
        ))}
      </MainTabs>

      <Body>
        <Main>
          <PointBar>
            <PointTitle>Pt. 1</PointTitle>
          </PointBar>
          <SubTabs role="tablist" $gap="7px" $columns="283fr 317fr 243fr 316fr 258fr 309fr">
            {SUB_TABS.map((label, i) => (
              <SubTab key={label} role="tab" aria-selected={i === 0} $on={i === 0}>{label}</SubTab>
            ))}
          </SubTabs>
          <Charts>
            {FRAMES.filter((frame) => shown[frame.name]).map((frame) => (
              <Chart key={frame.name} frame={frame} visible={visible} />
            ))}
          </Charts>
        </Main>

        <Side>
          <SubTabs role="tablist" $gap="6px" $columns="94fr 150fr">
            {SIDE_TABS.map((label, i) => (
              <SubTab key={label} role="tab" aria-selected={i === 0} $on={i === 0}>{label}</SubTab>
            ))}
          </SubTabs>

          <Group $top="120px" $pad="7px 4px 4px">
            <Legend>Graphs:</Legend>
            <PillGrid $columns={2}>
              {PILL_ORDER.map((channel) => (
                <Pill
                  key={channel.id}
                  $keyed
                  $on={visible[channel.id]}
                  aria-pressed={visible[channel.id]}
                  onClick={() => flipChannel(channel.id)}
                >
                  <Swatch $color={channel.swatch} />
                  <PillText>{channel.id}</PillText>
                </Pill>
              ))}
            </PillGrid>
          </Group>

          <Group $top="234px" $pad="7px 4px 4px">
            <Legend>Frames:</Legend>
            <PillGrid $columns={1}>
              {FRAMES.map(({ name }) => (
                <Pill
                  key={name}
                  $on={shown[name]}
                  aria-pressed={shown[name]}
                  onClick={() => flipFrame(name)}
                >
                  <PillText>{name}</PillText>
                </Pill>
              ))}
            </PillGrid>
          </Group>

          <Group $top="235px" $pad="0 4px">
            <Legend>Zoom</Legend>
            <ZoomGrid>
              <ZoomColumn>
                <ZoomTitle>X</ZoomTitle>
                <DarkButton $small $width="68px">Hz</DarkButton>
                <DarkButton $small $width="68px">ms</DarkButton>
              </ZoomColumn>
              <ZoomColumn $end>
                <ZoomTitle>Y</ZoomTitle>
                <DarkButton $small $active $width="72px" aria-label="Zoom in">+</DarkButton>
                <DarkButton $small $width="72px" aria-label="Zoom out">-</DarkButton>
              </ZoomColumn>
            </ZoomGrid>
          </Group>
        </Side>
      </Body>

      <Drawer aria-label="Open drawer">
        <svg width="62" height="31" viewBox="0 0 62 31" aria-hidden="true">
          <path d="M31 0 62 31H0Z" fill="#fff" />
        </svg>
      </Drawer>
    </Page>
  );
}
